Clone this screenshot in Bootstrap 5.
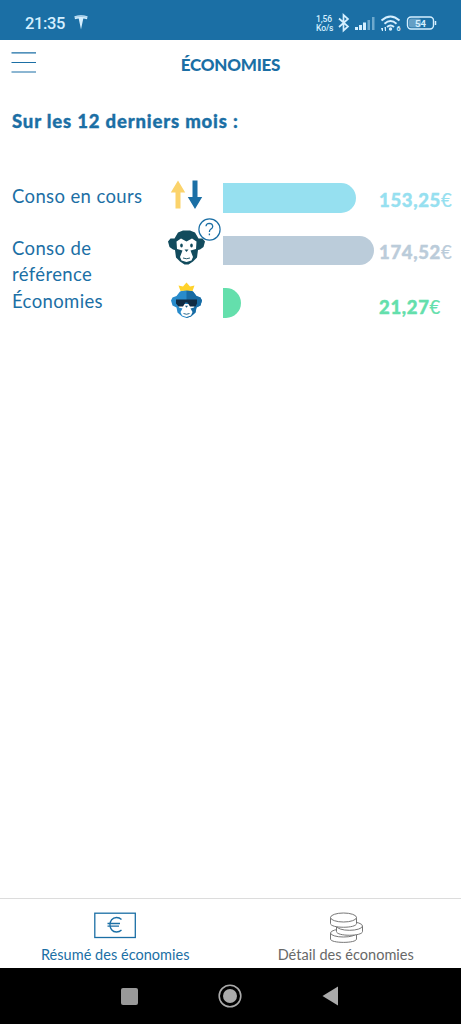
<!DOCTYPE html>
<html lang="fr">
<head>
<meta charset="utf-8">
<meta name="viewport" content="width=device-width, initial-scale=1">
<title>Économies</title>
<link href="https://cdn.jsdelivr.net/npm/bootstrap@5.3.0/dist/css/bootstrap.min.css" rel="stylesheet">
<style>
:root{--brand:#1b6fa5}
body{font-family:Lato,"Open Sans",sans-serif;color:var(--brand);height:1024px;overflow:hidden}
svg{display:block;flex:none}
.status{height:40px;background:var(--brand);color:#d5efff;font-family:Roboto,sans-serif;padding:6px 21px 0 25px}
.clock{font-size:16.5px;letter-spacing:-.35px;font-weight:500;line-height:35px;width:41px}
.tesla{margin:9px 0 0 8px}
.speed{font-size:8.5px;line-height:8.5px;font-weight:500;width:19px;margin-top:9px;letter-spacing:-.1px}
.topbar{height:50px}
.topbar h1{font-size:17px;font-weight:900;line-height:50px;letter-spacing:-.25px}
.menu{left:11px;top:12px;line-height:0}
.period{font-size:18.5px;font-weight:900;line-height:26px;margin:18px 0 49px 12px;letter-spacing:.82px;-webkit-text-stroke:.35px currentColor}
.stat{height:52.5px;padding-left:12px}
.stat-name{width:153px;font-size:18.5px;line-height:26px;letter-spacing:.37px;margin-top:-.5px}
.stat-icon{width:58px}
.track{width:156px}
.fill{height:29.5px;border-radius:0 15px 15px 0;background:currentColor}
.amount{font-size:18.5px;line-height:26px;font-weight:900;margin-top:4px;letter-spacing:.65px;white-space:nowrap;-webkit-text-stroke:.4px currentColor}
.amount span{font-weight:400;-webkit-text-stroke:.2px currentColor}
.cyan{color:#96e0f0}.grey{color:#bbccda}.green{color:#64dfac}
.tabs{height:70px;border-top:1px solid #dcdcdc}
.tab-item{width:50%;padding-top:13px;font-size:14.5px;line-height:20px;letter-spacing:.03px}
.tab-item svg{height:31px;margin-bottom:2px}
.tab-item:last-child{color:#686868}
.sysnav{height:56px;background:#000}
.sysnav svg{width:100%}
.question{left:32.5px;top:-17.5px;width:23px;height:23px}
</style>
</head>
<body class="d-flex flex-column bg-white">
<div class="status d-flex">
  <span class="clock">21:35</span>
  <svg class="tesla" width="14" height="15" viewBox="0 0 14 15" fill="#d5efff"><path d="M.4 1.200Q7-.8 13.600 1.200L13 4.200Q11 3.500 9.300 3.500L7 14.500 4.700 3.500Q3 3.500 1 4.200Z"/><path d="M.5 2.200Q7 .6 13.500 2.200" fill="none" stroke="#1b6fa5" stroke-width=".3"/></svg>
  <div class="d-flex ms-auto">
    <div class="speed">1,56<br>Ko/s</div>
    <svg width="105" height="28" viewBox="335 8 105 28" style="margin-top:2px" fill="none" stroke="#d5efff">
      <path d="M339 18.500l9 8-4.500 4V15l4.500 4-9 8" stroke-width="1.700"/>
      <g stroke="none" fill="#d5efff"><rect x="355" y="27" width="3" height="3"/><rect x="359" y="25" width="3" height="5"/><rect x="363" y="22.500" width="3" height="7.500"/><rect x="367.500" y="20" width="2.500" height="10" opacity=".45"/><rect x="372" y="17" width="2.500" height="13" opacity=".45"/></g>
      <g stroke-width="1.900"><path d="M381.500 20.500Q390.500 12.500 399.500 20.500"/><path d="M384.500 23.700Q390.500 18.500 396.500 23.700"/><path d="M387 27Q390.500 24 394 27"/></g>
      <g fill="#d5efff" stroke="none"><circle cx="390.500" cy="29" r="1.700"/><path d="M381 28h2v3h-1zM384.500 27h1.500v4h-1z"/></g>
      <text x="396.500" y="31" font-size="7" font-weight="700" fill="#d5efff" stroke="none">6</text>
      <rect x="407.500" y="17" width="26" height="12" rx="3.500" stroke-width="1.400"/><path d="M435.500 21v4" stroke-width="1.500"/><rect x="409" y="18.500" width="12" height="9" rx="2" fill="#659fc5" stroke="none"/>
      <text x="420.500" y="26.500" text-anchor="middle" font-size="9.500" font-weight="700" fill="#d5efff" stroke="none">54</text>
    </svg>
  </div>
</div>
<header class="topbar position-relative text-center">
  <span class="menu position-absolute"><svg width="26" height="22" viewBox="0 0 26 22"><path d="M.5 .8H25M.5 10.500H25M.5 20H25" stroke="#1b6fa5" stroke-width="1.200"/></svg></span>
  <h1 class="m-0">ÉCONOMIES</h1>
</header>
<main class="flex-grow-1">
  <h2 class="period">Sur les 12 derniers mois :</h2>
  <section class="stat d-flex">
    <div class="stat-name">Conso en cours</div>
    <div class="stat-icon"><svg width="44" height="32" viewBox="165 180 44 32" style="margin-top:-3px"><path d="M178 180.500l7.200 12h-4.700v16h-5V192.500H170.800Z" fill="#fbd36b"/><path d="M195 209l7.200-12h-4.700V180.500h-5V197h-4.700Z" fill="#1b6fa5"/></svg></div>
    <div class="track cyan"><div class="fill" style="width:132.5px"></div></div>
    <div class="amount cyan">153,25<span>€</span></div>
  </section>
  <section class="stat d-flex">
    <div class="stat-name">Conso de<br>référence</div>
    <div class="stat-icon position-relative">
      <svg width="44" height="40" viewBox="165 228 44 40" style="margin-top:-7.500px"><path d="M174.500 238.500L178 232.500 183 230.500H190L195 232.500 198.500 238.500H202.500L205 241.500 203.500 247 200 249.500 198 250 197 257.500 193 261.500 188.500 264.500H184.500L180 261.500 176 257.500 175 250 173 249.500 169.500 247 168 241.500 170.500 238.500Z" fill="#124b5d"/><path d="M176.500 241.500L181 238.500 186.500 241.500 192 238.500 196.500 241.500 196 249 190.500 250.500 193 257 191.500 260.500 186.500 262 181.500 260.500 180 257 182.500 250.500 177 249Z" fill="#fff"/><ellipse cx="181.500" cy="245.500" rx="1.300" ry="2" fill="#124b5d"/><ellipse cx="191.500" cy="245.500" rx="1.300" ry="2" fill="#124b5d"/><path d="M184.500 249.500h4l-2 2.500Z" fill="#124b5d"/><path d="M183 258q3.500 1.500 7 0" fill="none" stroke="#124b5d" stroke-width=".9"/></svg>
      <svg class="question position-absolute" viewBox="0 0 23 23" fill="none" stroke="#1b6fa5"><circle cx="11.500" cy="11.500" r="10.600" fill="#fff" stroke-width="1.200"/><path d="M8 8.300Q8.200 5.500 11.300 5.400 14.700 5.500 14.700 8.500 14.700 10.200 12.800 11.200 11.400 12 11.400 14M11.400 15.600v1.600" stroke-width="1.300"/></svg>
    </div>
    <div class="track grey"><div class="fill" style="width:150.5px"></div></div>
    <div class="amount grey" style="margin-top:3px">174,52<span>€</span></div>
  </section>
  <section class="stat d-flex">
    <div class="stat-name">Économies</div>
    <div class="stat-icon"><svg width="44" height="40" viewBox="165 280 44 40" style="margin-top:-8px"><path d="M176.500 296L180 291.500 186.500 289.500 193 291.500 196.500 296 200.500 297.500 202 300.500 200.500 305.500 196.500 307.500 195.500 312.500 191 316.500 186.500 318 182 316.500 177.500 312.500 176.500 307.500 172.500 305.500 171 300.500 172.500 297.500Z" fill="#288bcb"/><path d="M186.500 289.500L193 291.500 196.500 296 200.500 297.500 202 300.500 200.500 305.500 196.500 307.500 195.500 312.500 191 316.500 186.500 318Z" fill="#186ba3"/><path d="M178 304H195L194 307.500 190.500 308.500 192.500 312 191 315.500 186.500 317 182 315.500 180.500 312 182.500 308.500 179 307.500Z" fill="#fff"/><path d="M176 299.500H197V303.500L195.500 306.500H190L187.500 302.500H185.500L183 306.500H178.500L176 303.500Z" fill="#102b43"/><path d="M185 305.800h3l-1.500 2Z" fill="#155a82"/><path d="M183.500 313.500q3 1.500 6 0" fill="none" stroke="#155a82" stroke-width=".9"/><path d="M178.500 285.500l4.500 1 3.500-4 3.500 4 4.500-1-2 5.500q-6-1.200-12 0Z" fill="#ffd22b"/></svg></div>
    <div class="track green"><div class="fill" style="width:18px"></div></div>
    <div class="amount green" style="margin-top:6px">21,27<span>€</span></div>
  </section>
</main>
<nav class="tabs d-flex">
  <div class="tab-item d-flex flex-column align-items-center"><svg width="42" height="31" viewBox="0 0 42 31" fill="none" stroke="#1b6fa5" stroke-width="1.300"><rect x=".8" y="1.200" width="40.500" height="24.300"/><path d="M27.500 7.500Q25.500 5.500 22.500 5.500C13.800 5.500 13.800 20 22.500 20Q25.500 20 27.500 18M13.500 11.500H26M13.500 14.200H25"/></svg><span>Résumé des économies</span></div>
  <div class="tab-item d-flex flex-column align-items-center"><svg width="34" height="31" viewBox="0 0 34 31" fill="#fff" stroke="#686868" stroke-width=".9"><path d="M1.500 21v6c0 4.500 26 4.500 26 0v-6"/><ellipse cx="14.500" cy="21" rx="13" ry="4"/><path d="M7.500 14v5.500c0 5 26 5 26 0V14"/><ellipse cx="20.500" cy="14" rx="13" ry="4.300"/><path d="M1.500 5.500v6c0 5 26 5 26 0v-6"/><ellipse cx="14.500" cy="5.500" rx="13" ry="4.500"/></svg><span>Détail des économies</span></div>
</nav>
<footer class="sysnav"><svg height="56" viewBox="0 968 461 56"><rect x="121" y="988" width="17" height="17" rx="2" fill="#999"/><circle cx="230" cy="996" r="10.800" fill="none" stroke="#aaa" stroke-width="1.600"/><circle cx="230" cy="996" r="7" fill="#aaa"/><path d="M322.500 996l15.500-9.500v19Z" fill="#aaa"/></svg></footer>
<script src="https://cdn.jsdelivr.net/npm/bootstrap@5.3.0/dist/js/bootstrap.bundle.min.js"></script>
</body>
</html>
